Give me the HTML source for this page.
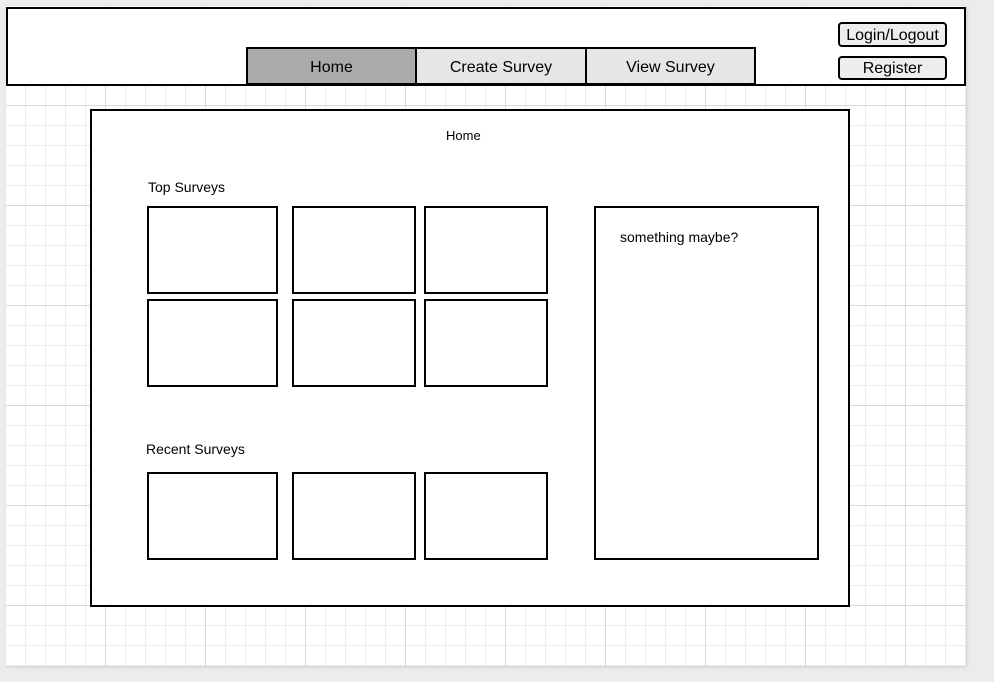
<!DOCTYPE html><html><head><style>
body{margin:0;width:994px;height:682px;background:#ececec;position:relative;overflow:hidden;font-family:"Liberation Sans",sans-serif;}
.c{position:absolute;left:6px;top:6px;width:960px;height:660px;background-color:#fff;
background-image:linear-gradient(#d8d8d8 1px,transparent 1px),linear-gradient(90deg,#d8d8d8 1px,transparent 1px),linear-gradient(#ececec 1px,transparent 1px),linear-gradient(90deg,#ececec 1px,transparent 1px);
background-size:100px 100px,100px 100px,20px 20px,20px 20px;background-position:0 -1px,-1px 0,0 -1px,-1px 0;box-shadow:1px 1px 3px #ccc;}
.b{position:absolute;border:2px solid #000;box-sizing:border-box;background:#fff;}
.t{position:absolute;font-size:14px;color:#000;}
.tab{position:absolute;border:2px solid #000;box-sizing:border-box;background:#e6e6e6;font-size:16px;text-align:center;line-height:37px;top:47px;height:38px}
.btn{position:absolute;left:838px;width:109px;border:2px solid #000;border-radius:4px;box-sizing:border-box;background:#eee;font-size:16px;text-align:center}
</style></head><body>
<div class="c"></div>
<div class="b" style="left:6px;top:7px;width:960px;height:79px"></div>
<div class="tab" style="left:246px;width:171px;background:#aaa">Home</div>
<div class="tab" style="left:415px;width:172px">Create Survey</div>
<div class="tab" style="left:585px;width:171px">View Survey</div>
<div class="btn" style="top:22px;height:25px;line-height:23px">Login/Logout</div>
<div class="btn" style="top:56px;height:24px;line-height:21px">Register</div>
<div class="b" style="left:90px;top:109px;width:760px;height:498px"></div>
<div class="t" style="left:446px;top:128px;font-size:13px">Home</div>
<div class="t" style="left:148px;top:179px">Top Surveys</div>
<div class="t" style="left:146px;top:441px">Recent Surveys</div>
<div class="b" style="left:147px;top:206px;width:131px;height:88px"></div>
<div class="b" style="left:292px;top:206px;width:124px;height:88px"></div>
<div class="b" style="left:424px;top:206px;width:124px;height:88px"></div>
<div class="b" style="left:147px;top:299px;width:131px;height:88px"></div>
<div class="b" style="left:292px;top:299px;width:124px;height:88px"></div>
<div class="b" style="left:424px;top:299px;width:124px;height:88px"></div>
<div class="b" style="left:147px;top:472px;width:131px;height:88px"></div>
<div class="b" style="left:292px;top:472px;width:124px;height:88px"></div>
<div class="b" style="left:424px;top:472px;width:124px;height:88px"></div>
<div class="b" style="left:594px;top:206px;width:225px;height:354px"></div>
<div class="t" style="left:620px;top:229px">something maybe?</div>
</body></html>
